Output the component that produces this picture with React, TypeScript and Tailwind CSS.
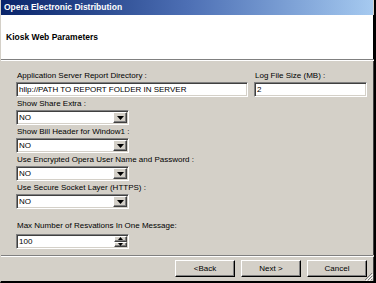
import React from 'react';

const font = "font-['Liberation_Sans',Arial,sans-serif]";

const sunken =
  'border border-t-[#808080] border-l-[#808080] border-b-white border-r-white shadow-[inset_1px_1px_0_#404040,inset_-1px_-1px_0_#d4d0c8] bg-white';

const raised =
  'bg-[#d4d0c8] border border-t-white border-l-white border-b-[#404040] border-r-[#404040] shadow-[inset_-1px_-1px_0_#808080]';

const Label = ({ children }: { children: React.ReactNode }) => (
  <div className="h-[13px] leading-[13px] pl-[1px] text-[8px] text-black">{children}</div>
);

const TextBox = ({ value, width }: { value: string; width: string }) => (
  <div className={`${sunken} ${width} h-[15px] pl-[2px] text-[8px] leading-[13px] overflow-hidden whitespace-nowrap`}>
    {value}
  </div>
);

const Select = ({ value }: { value: string }) => (
  <div className={`${sunken} w-[113px] h-[15px] flex items-stretch p-[1px]`}>
    <div className="flex-1 pl-[1px] text-[8px] leading-[11px]">{value}</div>
    <div className={`${raised} w-[14px] flex items-center justify-center`}>
      <svg width="7" height="4" viewBox="0 0 7 4">
        <path d="M0 0h7L3.5 4z" fill="#000" />
      </svg>
    </div>
  </div>
);

const Spinner = ({ value }: { value: string }) => (
  <div className={`${sunken} w-[113px] h-[15px] flex items-stretch p-[1px]`}>
    <div className="flex-1 pl-[1px] text-[8px] leading-[11px]">{value}</div>
    <div className="w-[13px] flex flex-col">
      <div className={`${raised} flex-1 flex items-center justify-center`}>
        <svg width="5" height="3" viewBox="0 0 5 3">
          <path d="M2.5 0L5 3H0z" fill="#000" />
        </svg>
      </div>
      <div className={`${raised} flex-1 flex items-center justify-center`}>
        <svg width="5" height="3" viewBox="0 0 5 3">
          <path d="M0 0h5L2.5 3z" fill="#000" />
        </svg>
      </div>
    </div>
  </div>
);

const Button = ({ children }: { children: React.ReactNode }) => (
  <button
    className={`w-[60px] h-[17px] text-[8px] text-black bg-[#d4d0c8] border border-t-white border-l-white border-b-black border-r-black shadow-[inset_-1px_-1px_0_#808080] ${font}`}
  >
    {children}
  </button>
);

export default function App() {
  return (
    <div className={`w-[376px] h-[283px] bg-white ${font}`}>
      <div className="w-[376px] h-[283px] flex flex-col bg-[#d4d0c8] border-l border-l-[#d4d0c8] border-r-2 border-r-black border-b-2 border-b-black">
        {/* title bar */}
        <div className="h-[15px] mr-[1px] bg-gradient-to-r from-[#0a246a] via-[#4d6fb4] to-[#a6caf0] flex items-center pl-[3px]">
          <span className="text-white font-bold text-[8.5px]">Opera Electronic Distribution</span>
        </div>

        {/* header */}
        <div className="h-[44px] bg-white border-r border-r-black flex items-center pl-[5px] pt-[1px]">
          <span className="font-bold text-[8.5px] text-black">Kiosk Web Parameters</span>
        </div>
        <div className="h-[1px] bg-[#808080]" />
        <div className="h-[1px] bg-white" />

        {/* body */}
        <div className="flex-1 flex flex-col border-r border-r-[#404040] pl-[15px] pt-[8px]">
          <div className="flex gap-[6px]">
            <div>
              <Label>Application Server Report Directory :</Label>
              <TextBox value="hllp://PATH TO REPORT FOLDER IN SERVER" width="w-[232px]" />
            </div>
            <div>
              <Label>Log File Size (MB) :</Label>
              <TextBox value="2" width="w-[113px]" />
            </div>
          </div>

          <Label>Show Share Extra :</Label>
          <Select value="NO" />
          <Label>Show Bill Header for Window1 :</Label>
          <Select value="NO" />
          <Label>Use Encrypted Opera User Name and Password :</Label>
          <Select value="NO" />
          <Label>Use Secure Socket Layer (HTTPS) :</Label>
          <Select value="NO" />

          <div className="mt-[10px]">
            <Label>Max Number of Resvations In One Message:</Label>
          </div>
          <div className="mt-[2px]">
            <Spinner value="100" />
          </div>
        </div>

        {/* footer */}
        <div className="h-[1px] bg-[#808080] mr-[1px]" />
        <div className="h-[1px] bg-white mr-[1px]" />
        <div className="h-[24px] relative flex justify-end items-start gap-[6px] pr-[6px] pt-[3px] border-r border-r-[#404040]">
          <Button>&lt;Back</Button>
          <Button>Next &gt;</Button>
          <Button>Cancel</Button>
          <svg className="absolute right-[0px] bottom-[0px]" width="10" height="10" viewBox="0 0 10 10">
            <path d="M9 2L2 9M9 5L5 9M9 8L8 9" stroke="#808080" strokeWidth="1" />
            <path d="M10 3L3 10M10 6L6 10" stroke="#ffffff" strokeWidth="1" />
          </svg>
        </div>
      </div>
    </div>
  );
}
